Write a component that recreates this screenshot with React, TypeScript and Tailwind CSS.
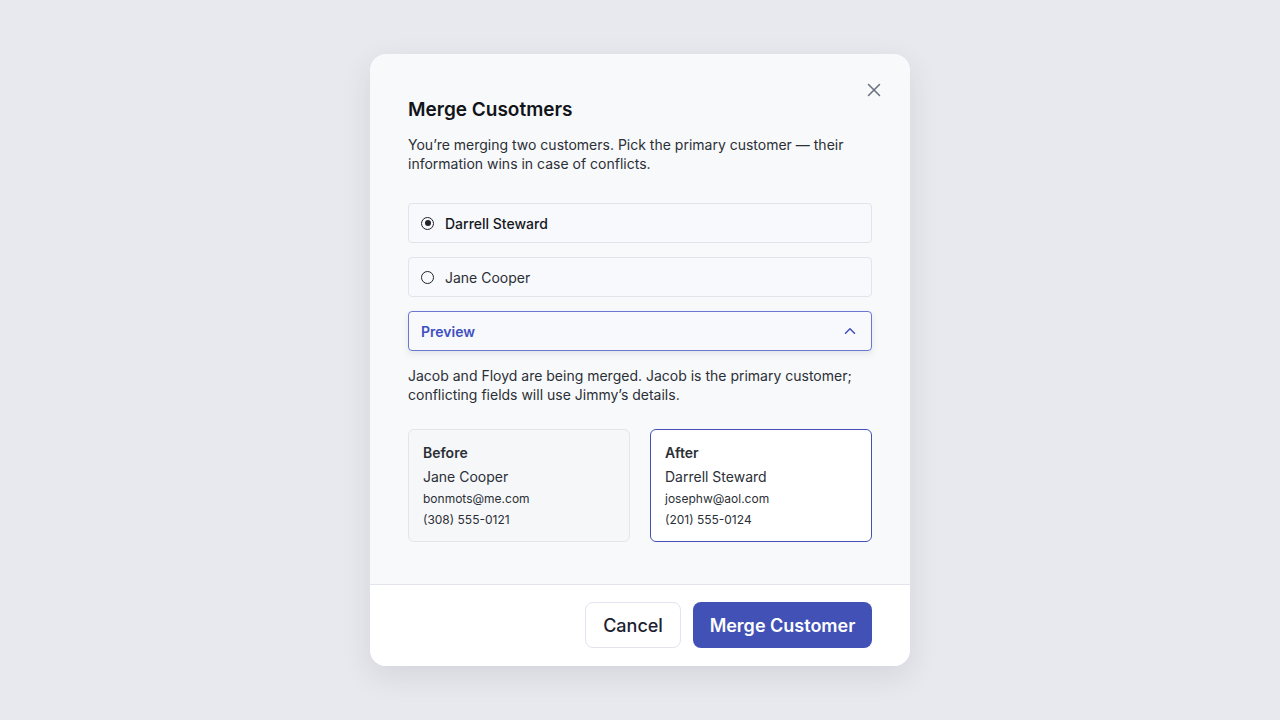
import * as React from "react";
import { X, ChevronUp } from "lucide-react";

type Option = { id: string; name: string };

const options: Option[] = [
  { id: "darrell", name: "Darrell Steward" },
  { id: "jane", name: "Jane Cooper" },
];

export default function App() {
  const [primary, setPrimary] = React.useState("darrell");
  const [open, setOpen] = React.useState(true);

  return (
    <div
      className="flex min-h-screen items-start justify-center bg-[#e8e9ee] pt-[54px]"
      style={{ fontFamily: "Inter, 'Noto Sans', sans-serif" }}
    >
      <div className="w-[540px] overflow-hidden rounded-2xl bg-[#f8f9fb] shadow-[0_10px_30px_rgba(30,35,60,0.10)]">
        <div className="relative px-[38px] pt-[44px] pb-[42px]">
          <button className="absolute right-[25px] top-[25px] text-[#6b7280]" aria-label="Close">
            <X className="h-[22px] w-[22px]" strokeWidth={1.7} />
          </button>

          <h2 className="text-[19px] font-semibold leading-6 text-[#111418]">Merge Cusotmers</h2>
          <p className="mt-[13px] text-[14px] leading-[19px] text-[#2b2f36]">
            You’re merging two customers. Pick the primary customer — their information wins in case of conflicts.
          </p>

          <div className="mt-[30px] flex flex-col gap-[14px]">
            {options.map((o) => {
              const on = primary === o.id;
              return (
                <label
                  key={o.id}
                  className="flex h-[40px] cursor-pointer items-center gap-[11px] rounded-[4px] border border-[#e1e4ea] bg-[#f7f9fc] px-[12px]"
                >
                  <input
                    type="radio"
                    name="primary"
                    className="sr-only"
                    checked={on}
                    onChange={() => setPrimary(o.id)}
                  />
                  <span className="flex h-[13px] w-[13px] items-center justify-center rounded-full border-[1.5px] border-[#1f2329]">
                    {on && <span className="h-[6px] w-[6px] rounded-full bg-[#1f2329]" />}
                  </span>
                  <span className={on ? "text-[14px] font-medium text-[#15181d]" : "text-[14px] text-[#2b2f36]"}>
                    {o.name}
                  </span>
                </label>
              );
            })}

            <button
              onClick={() => setOpen(!open)}
              className="flex h-[40px] items-center justify-between rounded-[4px] border border-[#6b78d0] bg-[#f7f9fd] px-[12px] shadow-[0_3px_6px_rgba(40,50,90,0.10)]"
            >
              <span className="text-[14px] font-semibold text-[#3f4fbf]">Preview</span>
              <ChevronUp className="h-[18px] w-[18px] text-[#3f4fbf]" strokeWidth={2} />
            </button>
          </div>

          {open && (
            <>
              <p className="mt-[15px] text-[14px] leading-[19px] text-[#2b2f36]">
                Jacob and Floyd are being merged. Jacob is the primary customer; conflicting fields will use Jimmy’s details.
              </p>

              <div className="mt-[25px] grid grid-cols-2 gap-[20px]">
                <div className="h-[113px] rounded-[6px] border border-[#e3e5ea] bg-[#f6f7f9] px-[14px] pt-[13px]">
                  <div className="text-[14px] font-semibold leading-5 text-[#2b2f36]">Before</div>
                  <div className="mt-[4px] text-[14px] leading-5 text-[#2b2f36]">Jane Cooper</div>
                  <div className="mt-[2px] text-[12px] leading-5 text-[#2b2f36]">bonmots@me.com</div>
                  <div className="mt-[1px] text-[12px] leading-5 text-[#2b2f36]">(308) 555-0121</div>
                </div>
                <div className="h-[113px] rounded-[6px] border border-[#4450b8] bg-white px-[14px] pt-[13px]">
                  <div className="text-[14px] font-semibold leading-5 text-[#2b2f36]">After</div>
                  <div className="mt-[4px] text-[14px] leading-5 text-[#2b2f36]">Darrell Steward</div>
                  <div className="mt-[2px] text-[12px] leading-5 text-[#2b2f36]">josephw@aol.com</div>
                  <div className="mt-[1px] text-[12px] leading-5 text-[#2b2f36]">(201) 555-0124</div>
                </div>
              </div>
            </>
          )}
        </div>

        <div className="flex justify-end gap-[12px] border-t border-[#e2e5ec] bg-white px-[38px] pt-[17px] pb-[18px]">
          <button className="h-[46px] w-[96px] rounded-[8px] border border-[#e1e4ee] bg-white text-[18px] font-medium text-[#1c2230]">
            Cancel
          </button>
          <button className="h-[46px] w-[179px] rounded-[8px] bg-[#4151b6] text-[18px] font-semibold text-white">
            Merge Customer
          </button>
        </div>
      </div>
    </div>
  );
}
